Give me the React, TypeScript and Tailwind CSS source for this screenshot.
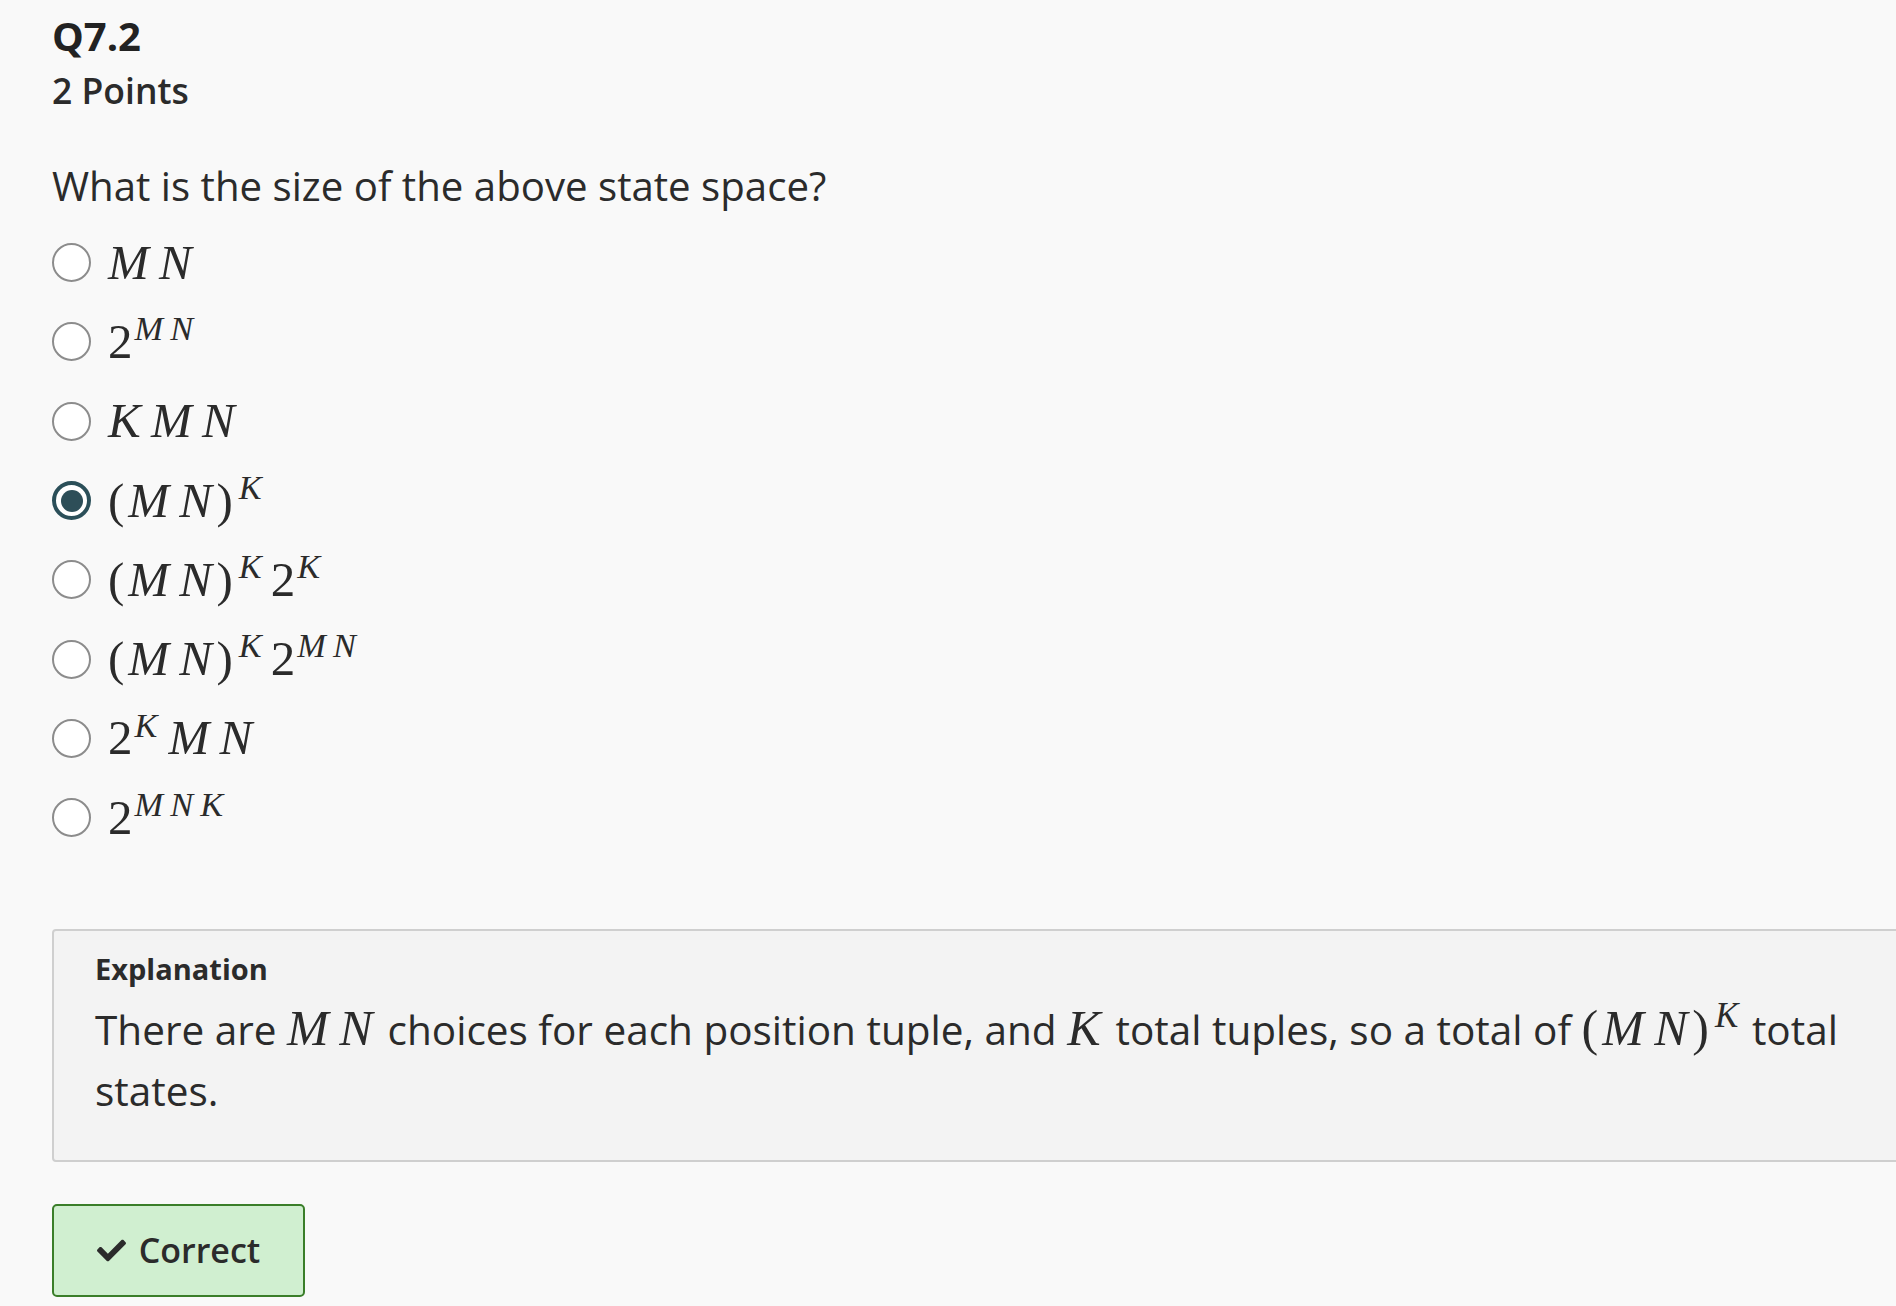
import type { ReactNode } from "react";
import { FaCheck } from "react-icons/fa";

// math pieces (stand-in for KaTeX)
function Mi({ children }: { children: ReactNode }) {
  return (
    <span className="italic tracking-[0.21em] mr-[-0.12em]">{children}</span>
  );
}

function Sup({ children }: { children: ReactNode }) {
  return (
    <span className="text-[0.7em] leading-[0] align-[0.52em] ml-[2px]">
      {children}
    </span>
  );
}

function Paren({ children }: { children: ReactNode }) {
  return <span className="tracking-[0.08em]">{children}</span>;
}

const options: { id: string; math: ReactNode }[] = [
  { id: "mn", math: <Mi>MN</Mi> },
  {
    id: "2mn",
    math: (
      <>
        2<Sup><Mi>MN</Mi></Sup>
      </>
    ),
  },
  { id: "kmn", math: <Mi>KMN</Mi> },
  {
    id: "mnk",
    math: (
      <>
        <Paren>(</Paren>
        <Mi>MN</Mi>
        <Paren>)</Paren>
        <Sup><Mi>K</Mi></Sup>
      </>
    ),
  },
  {
    id: "mnk2k",
    math: (
      <>
        <Paren>(</Paren>
        <Mi>MN</Mi>
        <Paren>)</Paren>
        <Sup><Mi>K</Mi></Sup>
        <span className="ml-[6px]">2</span>
        <Sup><Mi>K</Mi></Sup>
      </>
    ),
  },
  {
    id: "mnk2mn",
    math: (
      <>
        <Paren>(</Paren>
        <Mi>MN</Mi>
        <Paren>)</Paren>
        <Sup><Mi>K</Mi></Sup>
        <span className="ml-[6px]">2</span>
        <Sup><Mi>MN</Mi></Sup>
      </>
    ),
  },
  {
    id: "2kmn",
    math: (
      <>
        2<Sup><Mi>K</Mi></Sup>
        <span className="ml-[8px]">
          <Mi>MN</Mi>
        </span>
      </>
    ),
  },
  {
    id: "2mnk",
    math: (
      <>
        2<Sup><Mi>MNK</Mi></Sup>
      </>
    ),
  },
];

function Radio({ checked }: { checked: boolean }) {
  if (checked) {
    return (
      <span className="w-[39px] h-[39px] rounded-full border-4 border-[#2b4f59] bg-white flex items-center justify-center shrink-0">
        <span className="w-[22px] h-[22px] rounded-full bg-[#2d4e58]" />
      </span>
    );
  }
  return (
    <span className="w-[39px] h-[39px] rounded-full border-2 border-[#8c8c8c] bg-white shrink-0" />
  );
}

export default function App() {
  const selected = "mnk";

  return (
    <div className="min-h-screen overflow-hidden bg-[#f9f9f9] text-[#2b2b2b] font-['Open_Sans',sans-serif] pl-[52px]">
      <h1 className="pt-[12px] text-[40px] leading-[48px] font-bold text-[#222]">
        Q7.2
      </h1>
      <div className="mt-[9px] text-[35.5px] leading-[43px] font-semibold">
        2 Points
      </div>

      <p className="mt-[50px] text-[40.2px] leading-[48px]">
        What is the size of the above state space?
      </p>

      <div className="mt-[13px] flex flex-col">
        {options.map((o) => (
          <label key={o.id} className="h-[79.3px] flex items-center">
            <Radio checked={o.id === selected} />
            <span className="ml-[17px] font-['Liberation_Serif',serif] text-[49px] leading-[40px] text-[#2b2b2b] whitespace-nowrap">
              {o.math}
            </span>
          </label>
        ))}
      </div>

      <div className="mt-[72px] w-[1900px] rounded-[4px] border-2 border-[#cfcfcf] bg-[#f3f3f3] pl-[41px] pr-[41px] pt-[18px] pb-[39px]">
        <div className="text-[29px] leading-[40px] font-bold">Explanation</div>
        <p className="mt-[9.5px] text-[40.5px] leading-[61px]">
          There are{" "}
          <span className="font-['Liberation_Serif',serif] text-[50px] leading-[0]">
            <Mi>MN</Mi>
          </span>{" "}
          choices for each position tuple, and{" "}
          <span className="font-['Liberation_Serif',serif] text-[50px] leading-[0]">
            <Mi>K</Mi>
          </span>{" "}
          total tuples, so a total of{" "}
          <span className="font-['Liberation_Serif',serif] text-[50px] leading-[0]">
            <Paren>(</Paren>
            <Mi>MN</Mi>
            <Paren>)</Paren>
            <Sup>
              <Mi>K</Mi>
            </Sup>
          </span>{" "}
          total states.
        </p>
      </div>

      <button
        type="button"
        className="mt-[42px] w-[253px] h-[93px] rounded-[5px] border-2 border-[#3a7e29] bg-[#d0efd0] flex items-center justify-center gap-[13px] text-[34px] font-semibold text-[#2b2b2b]"
      >
        <FaCheck className="w-[29px] h-[29px]" />
        Correct
      </button>
    </div>
  );
}
